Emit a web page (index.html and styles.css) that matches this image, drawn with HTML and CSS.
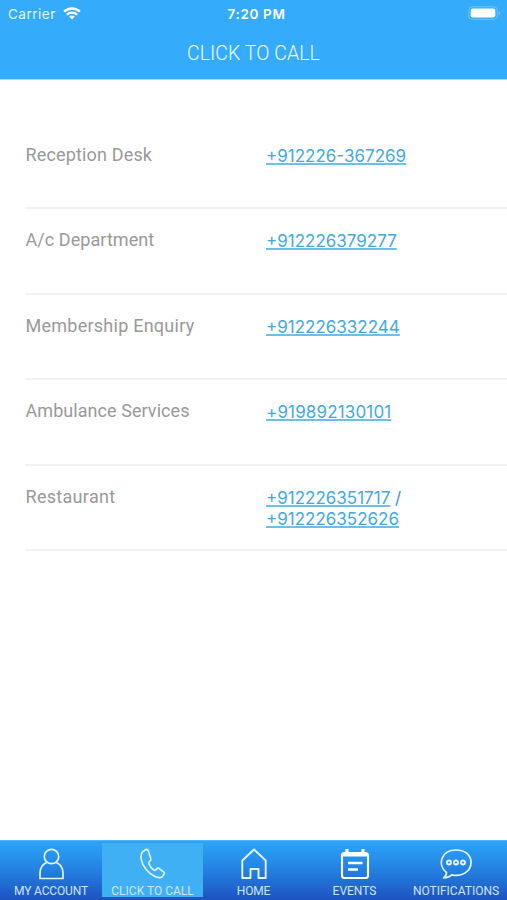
FILE: index.html
```html
<!DOCTYPE html>
<html lang="en">
<head>
<meta charset="utf-8">
<title>Click to Call</title>
<link rel="stylesheet" href="styles.css">
</head>
<body>
<div class="app">
  <header class="header">
    <div class="status">
      <div class="carrier"><span>Carrier</span>
        <svg width="18" height="13" viewBox="0 0 18 13" fill="none" stroke="#fff" stroke-width="2.3"><path d="M1.1 4.7a11.4 11.4 0 0 1 15.8 0M3.9 7.8a7.3 7.3 0 0 1 10.2 0"/><path d="M9 12.5 6.2 9.8a4 4 0 0 1 5.6 0z" fill="#fff" stroke="none"/></svg>
      </div>
      <span class="time">7:20 PM</span>
      <svg class="battery" width="33" height="15" viewBox="0 0 33 15"><rect x=".75" y=".75" width="28.5" height="12.5" rx="3.5" fill="none" stroke="#6fc3fc"/><rect x="2.7" y="2.6" width="24.600" height="8.800" rx="1.8" fill="#fff"/><path d="M30.7 5v4.400q1.2-.9 1.2-2.200T30.7 5z" fill="#87ccfc"/></svg>
    </div>
    <h1 class="title">CLICK TO CALL</h1>
  </header>
  <main class="list">
    <section class="row"><span class="label reception">Reception Desk</span><div class="phones"><a>+912226-367269</a></div></section>
    <section class="row"><span class="label account">A/c Department</span><div class="phones"><a>+912226379277</a></div></section>
    <section class="row"><span class="label membership">Membership Enquiry</span><div class="phones"><a>+912226332244</a></div></section>
    <section class="row"><span class="label ambulance">Ambulance Services</span><div class="phones"><a class="wide">+919892130101</a></div></section>
    <section class="row"><span class="label restaurant">Restaurant</span><div class="phones"><a>+912226351717</a> /<br><a>+912226352626</a></div></section>
  </main>
  <nav class="tabs">
    <div class="tab"><svg class="icon" viewBox="0 0 32 32"><circle cx="16.5" cy="8.500" r="7.200"/><path d="M12 14.300C7.500 16.500 5 20 5 25v5.500h23V25c0-5-2.500-8.500-7-10.700"/></svg><span class="name my-account">MY ACCOUNT</span></div>
    <div class="tab active"><svg class="icon" viewBox="0 0 32 32"><path transform="translate(.4) scale(.94 1)" d="M8.600 1.700 6.400 3.200C2 6.600 3.500 15 9.300 21.500c5.700 6.500 13.700 10 17.300 7.100l1.600-2.200c.8-1 .6-1.900-.3-2.500l-4.700-3.300c-1-.7-2-.5-2.700.5-.9 1.300-1.800 1.700-3.300.7-2.300-1.500-4-3.700-4.900-5.900-.5-1.500.1-2.200 1.100-2.800 1.200-.7 1.300-1.500.8-2.600L11.600 2.800c-.7-1.500-1.700-1.900-3-1.100z"/></svg><span class="name click">CLICK TO CALL</span></div>
    <div class="tab"><svg class="icon home" viewBox="0 0 32 32"><path d="M4.300 12.500 16 1.500l11.700 11V30H20.500v-9h-8v9H4.300z"/></svg><span class="name home-name">HOME</span></div>
    <div class="tab"><svg class="icon events" viewBox="0 0 32 32"><rect x="3" y="5" width="26" height="25" rx="2.500"/><path d="M3.500 7h25M8 1v7M24 1v7" stroke-width="3.200"/><path d="M9 15h14.500M9 21.500h10" stroke-width="2.600"/></svg><span class="name events-name">EVENTS</span></div>
    <div class="tab"><svg class="icon" viewBox="0 0 32 32"><path d="M6.500 24.500C-3 17 1 2 16 2c9 0 15 5 15 12.500 0 9-9 14.500-19 12.300-2 1.800-4.500 2.900-8.400 3.100C5.700 28.400 6.500 27 6.500 24.500z"/><g stroke-width="1.900"><circle cx="9" cy="14.500" r="2"/><circle cx="16" cy="14.500" r="2"/><circle cx="23" cy="14.500" r="2"/></g></svg><span class="name notifications">NOTIFICATIONS</span></div>
  </nav>
</div>
</body>
</html>
```
FILE: styles.css
```css
* { box-sizing: border-box; }
body { margin: 0; background: #fff; font-family: Roboto, sans-serif; }
.app { width: 507px; height: 900px; display: flex; flex-direction: column; overflow: hidden; }
.header { height: 80px; flex: none; background: #35abfb; border-bottom: 1px solid #9be2fd; color: #fff; }
.status { height: 27px; padding: 0 6px 0 8px; display: grid; grid-template-columns: 1fr auto 1fr; align-items: center; font-family: Inter, sans-serif; font-size: 13.5px; }
.carrier { display: flex; align-items: center; gap: 7px; color: #e3f6ff; letter-spacing: .5px; }
.time { font-weight: 600; letter-spacing: .65px; font-size: 13.5px; position: relative; left: 2px; }
.battery { justify-self: end; }
.title { margin: 0; height: 53px; line-height: 53px; text-align: center; font-size: 19.5px; font-weight: 300; letter-spacing: .05px; color: #f1fbff; }
.list { flex: 1; padding: 43.500px 0 0 25px; }
.row { height: 85.500px; display: grid; grid-template-columns: 241px 1fr; align-items: start; border-bottom: 2px solid #f2f2f3; padding-top: 20px; }
.label { padding-left: .5px; color: #999; font-size: 18px; line-height: 21px; }
.reception { letter-spacing: .16px; }
.account { letter-spacing: .06px; }
.membership { letter-spacing: .25px; }
.ambulance { letter-spacing: .06px; }
.restaurant { letter-spacing: .3px; }
.phones { padding-top: 2px; font-family: Inter, sans-serif; font-size: 17px; line-height: 21px; color: #3e8bea; }
.phones a { color: #42a9df; text-decoration: underline; text-decoration-color: #6bc0e9; text-decoration-thickness: 1.500px; text-underline-offset: .5px; text-decoration-skip-ink: none; }
.phones .wide { letter-spacing: .15px; }
.tabs { height: 60px; flex: none; display: grid; grid-template-columns: 102px 101px 101px 101px 102px; background: linear-gradient(#2ba5f8, #2482e2 48%, #1d52bf); border-top: 1px solid #55b4f5; }
.tab { display: flex; flex-direction: column; align-items: center; padding-top: 7px; height: 59px; }
.active { background: #3eb0f3; height: 54px; margin: 2px 0 0; padding-top: 5px; }
.icon { width: 32px; height: 32px; flex: none; fill: none; stroke: #e2f5ff; stroke-width: 1.700; stroke-linejoin: round; }
.home { stroke-width: 1.900; }
.events { stroke-width: 2.100; stroke: #fff; }
.name { margin-top: 4px; font-size: 12px; line-height: 15px; color: #cfe4fa; white-space: nowrap; }
.my-account { letter-spacing: -.15px; }
.home-name { letter-spacing: -.15px; }
```
